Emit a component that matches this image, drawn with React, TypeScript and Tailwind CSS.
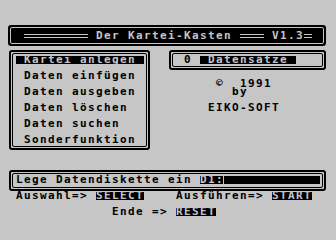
import React from "react";

// Atari-style screen: every character sits in an 8px cell
function Txt({
  children,
  inv = false,
  className = "",
}: {
  children: React.ReactNode;
  inv?: boolean;
  className?: string;
}) {
  return (
    <span
      className={`block h-[8px] whitespace-pre text-[11px] font-bold leading-[8px] tracking-[1.38px] ${
        inv ? "bg-black text-[#c6c6c6]" : "text-black"
      } ${className}`}
    >
      {children}
    </span>
  );
}

// double horizontal rule glyph
function DLine({ className = "" }: { className?: string }) {
  return (
    <div className={`h-[8px] pt-[2px] ${className}`}>
      <div className="h-[1px] bg-[#c6c6c6]" />
      <div className="mt-[2px] h-[1px] bg-[#c6c6c6]" />
    </div>
  );
}

function Frame({
  children,
  className = "",
  inner = "",
}: {
  children: React.ReactNode;
  className?: string;
  inner?: string;
}) {
  return (
    <div className={`rounded-[3px] border-2 border-black p-[1px] ${className}`}>
      <div className={`h-full rounded-[2px] border border-black ${inner}`}>{children}</div>
    </div>
  );
}

export default function App() {
  const menu = ["Daten einfügen", "Daten ausgeben", "Daten löschen", "Daten suchen", "Sonderfunktion"];

  return (
    <div className="h-[240px] w-[336px] overflow-hidden bg-[#c6c6c6] pt-[25px] font-['DejaVu_Sans_Mono',monospace]">
      {/* Titelzeile */}
      <div className="ml-[8px] h-[21px] w-[318px] rounded-[3px] bg-black p-[2px]">
        <div className="flex h-full items-start rounded-[2px] border border-[#c6c6c6] pl-[13px] pt-[4px]">
          <DLine className="w-[64px]" />
          <Txt inv className="ml-[8px]">Der Kartei-Kasten</Txt>
          <DLine className="ml-[8px] w-[24px]" />
          <Txt inv className="ml-[8px]">V1.3</Txt>
          <DLine className="w-[8px]" />
        </div>
      </div>

      <div className="mt-[4px] flex">
        {/* Menü */}
        <Frame className="ml-[9px] h-[100px] w-[141px]" inner="flex flex-col gap-[8px] pl-[3px] pt-[2px]">
          <Txt inv className="w-[128px] pl-[8px]">Kartei anlegen</Txt>
          {menu.map((m) => (
            <Txt key={m} className="pl-[8px]">
              {m}
            </Txt>
          ))}
        </Frame>

        <div className="ml-[19px] w-[157px]">
          <Frame className="h-[20px]" inner="flex pl-[11px] pt-[2px]">
            <Txt>0</Txt>
            <Txt inv className="ml-[8px] w-[96px] pl-[8px]">Datensätze</Txt>
          </Frame>
          <div className="mt-[10px]">
            <Txt className="ml-[47px]">©  1991</Txt>
            <Txt className="ml-[47px]">  by</Txt>
            <Txt className="ml-[39px] mt-[8px]">EIKO-SOFT</Txt>
          </div>
        </div>
      </div>

      {/* Eingabezeile */}
      <Frame className="ml-[9px] mt-[20px] h-[21px] w-[317px]" inner="flex pl-[3px] pt-[2px]">
        <Txt className="w-[184px]">Lege Datendiskette ein</Txt>
        <Txt inv className="w-[24px] border-r border-[#c6c6c6]">D1:</Txt>
        <div className="h-[8px] w-[96px] bg-black" />
      </Frame>

      <div className="mt-[1px] flex pl-[16px]">
        <Txt>Auswahl=&gt;</Txt>
        <Txt inv className="ml-[8px]">SELECT</Txt>
        <Txt className="ml-[32px]">Ausführen=&gt;</Txt>
        <Txt inv className="ml-[8px]">START</Txt>
      </div>

      <div className="mt-[8px] flex pl-[112px]">
        <Txt>Ende =&gt;</Txt>
        <Txt inv className="ml-[8px]">RESET</Txt>
      </div>
    </div>
  );
}
